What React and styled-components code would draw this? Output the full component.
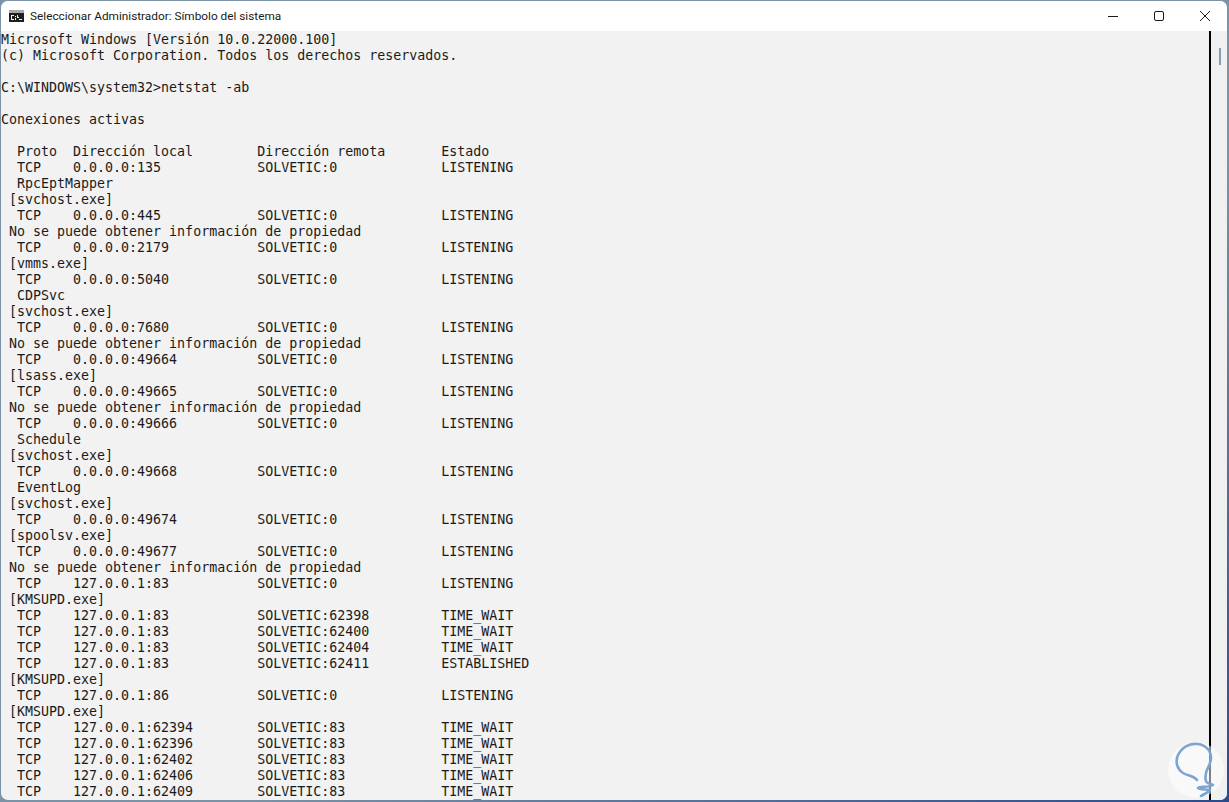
import React from "react";
import styled, { createGlobalStyle } from "styled-components";

const Global = createGlobalStyle`
  html, body { margin: 0; padding: 0; height: 100%; background: #6f8ba3; overflow: hidden; }
`;

const Frame = styled.div`
  position: relative;
  box-sizing: border-box;
  width: 1229px;
  height: 802px;
  padding: 1px 2px 2px 1px;
  background: linear-gradient(to bottom right, #7b93a6 0%, #7b93a6 60%, #2b4a8c 100%);
  overflow: hidden;
`;

const Window = styled.div`
  display: flex;
  flex-direction: column;
  height: 100%;
  border-radius: 7px;
  overflow: hidden;
  background: #f2f2f2;
`;

const TitleBar = styled.div`
  display: flex;
  align-items: center;
  flex: 0 0 30px;
  background: #ffffff;
  padding-left: 8px;
`;

const TitleText = styled.span`
  margin-left: 6px;
  font: 11.8px "Roboto", "Noto Sans", sans-serif;
  color: #1a1a1a;
  flex: 1;
`;

const Controls = styled.div`
  display: flex;
  align-self: stretch;
  margin-right: -1px;
`;

const ControlButton = styled.div`
  width: 46px;
  display: flex;
  align-items: center;
  justify-content: center;
`;

const Body = styled.div`
  flex: 1;
  display: flex;
  min-height: 0;
`;

const Console = styled.pre`
  flex: 1;
  margin: 0;
  padding-top: 1px;
  overflow: hidden;
  font: 13.3px/16px "DejaVu Sans Mono", monospace;
  color: #1a1a1a;
`;

const Scrollbar = styled.div`
  box-sizing: border-box;
  flex: 0 0 18px;
  border-left: 2px solid #000000;
  padding: 17px 0 0 8px;
  background: #f0f0f0;
`;

const Thumb = styled.div`
  width: 2px;
  height: 17px;
  background: #8a9db0;
`;

const Badge = styled.div`
  position: absolute;
  right: 5px;
  bottom: 4px;
  width: 56px;
  height: 56px;
  border-radius: 50%;
  background: rgba(255, 255, 255, 0.5);
`;

const CONSOLE_TEXT = `Microsoft Windows [Versión 10.0.22000.100]
(c) Microsoft Corporation. Todos los derechos reservados.

C:\\WINDOWS\\system32>netstat -ab

Conexiones activas

  Proto  Dirección local        Dirección remota       Estado
  TCP    0.0.0.0:135            SOLVETIC:0             LISTENING
  RpcEptMapper
 [svchost.exe]
  TCP    0.0.0.0:445            SOLVETIC:0             LISTENING
 No se puede obtener información de propiedad
  TCP    0.0.0.0:2179           SOLVETIC:0             LISTENING
 [vmms.exe]
  TCP    0.0.0.0:5040           SOLVETIC:0             LISTENING
  CDPSvc
 [svchost.exe]
  TCP    0.0.0.0:7680           SOLVETIC:0             LISTENING
 No se puede obtener información de propiedad
  TCP    0.0.0.0:49664          SOLVETIC:0             LISTENING
 [lsass.exe]
  TCP    0.0.0.0:49665          SOLVETIC:0             LISTENING
 No se puede obtener información de propiedad
  TCP    0.0.0.0:49666          SOLVETIC:0             LISTENING
  Schedule
 [svchost.exe]
  TCP    0.0.0.0:49668          SOLVETIC:0             LISTENING
  EventLog
 [svchost.exe]
  TCP    0.0.0.0:49674          SOLVETIC:0             LISTENING
 [spoolsv.exe]
  TCP    0.0.0.0:49677          SOLVETIC:0             LISTENING
 No se puede obtener información de propiedad
  TCP    127.0.0.1:83           SOLVETIC:0             LISTENING
 [KMSUPD.exe]
  TCP    127.0.0.1:83           SOLVETIC:62398         TIME_WAIT
  TCP    127.0.0.1:83           SOLVETIC:62400         TIME_WAIT
  TCP    127.0.0.1:83           SOLVETIC:62404         TIME_WAIT
  TCP    127.0.0.1:83           SOLVETIC:62411         ESTABLISHED
 [KMSUPD.exe]
  TCP    127.0.0.1:86           SOLVETIC:0             LISTENING
 [KMSUPD.exe]
  TCP    127.0.0.1:62394        SOLVETIC:83            TIME_WAIT
  TCP    127.0.0.1:62396        SOLVETIC:83            TIME_WAIT
  TCP    127.0.0.1:62402        SOLVETIC:83            TIME_WAIT
  TCP    127.0.0.1:62406        SOLVETIC:83            TIME_WAIT
  TCP    127.0.0.1:62409        SOLVETIC:83            TIME_WAIT`;

const CmdIcon = () => (
  <svg width="15" height="12" viewBox="0 0 15 12">
    <rect x="0" y="0" width="15" height="12" fill="#1f1f1f" />
    <rect x="0" y="0" width="15" height="3" fill="#a8a8a8" />
    <path d="M2 5h3v1H3v3h2v1H2zM6 6h1v1H6zM6 8h1v2H6zM8 5h1v2h1v1H8zM10 9h3v1h-3z" fill="#f2f2f2" />
  </svg>
);

const Logo = () => (
  <svg width="56" height="56" viewBox="0 0 56 56">
    <path
      d="M29 38 C26 34 20 34 15 31 C9 27 7 20 10 13 C14 5 22 1 30 2 C38 3 43 9 43 16 C43 22 39 26 38 31 C37 36 37 40 40 41 L45 43 C40 46 32 44 30 46 C31 48 38 47 42 48 C40 51 36 52 33 54"
      fill="none"
      stroke="#7ba6d3"
      strokeWidth="2.6"
      strokeLinecap="round"
      strokeLinejoin="round"
    />
  </svg>
);

export default function App() {
  return (
    <Frame>
      <Global />
      <Window>
        <TitleBar>
          <CmdIcon />
          <TitleText>Seleccionar Administrador: Símbolo del sistema</TitleText>
          <Controls>
            <ControlButton>
              <svg width="10" height="10" viewBox="0 0 10 10"><path d="M0 5.5h10" stroke="#1a1a1a" /></svg>
            </ControlButton>
            <ControlButton>
              <svg width="10" height="10" viewBox="0 0 10 10"><rect x=".5" y=".5" width="9" height="9" rx="1.5" fill="none" stroke="#1a1a1a" /></svg>
            </ControlButton>
            <ControlButton>
              <svg width="10" height="10" viewBox="0 0 10 10"><path d="M0 0l10 10M10 0L0 10" stroke="#1a1a1a" /></svg>
            </ControlButton>
          </Controls>
        </TitleBar>
        <Body>
          <Console>{CONSOLE_TEXT}</Console>
          <Scrollbar><Thumb /></Scrollbar>
        </Body>
      </Window>
      <Badge><Logo /></Badge>
    </Frame>
  );
}
